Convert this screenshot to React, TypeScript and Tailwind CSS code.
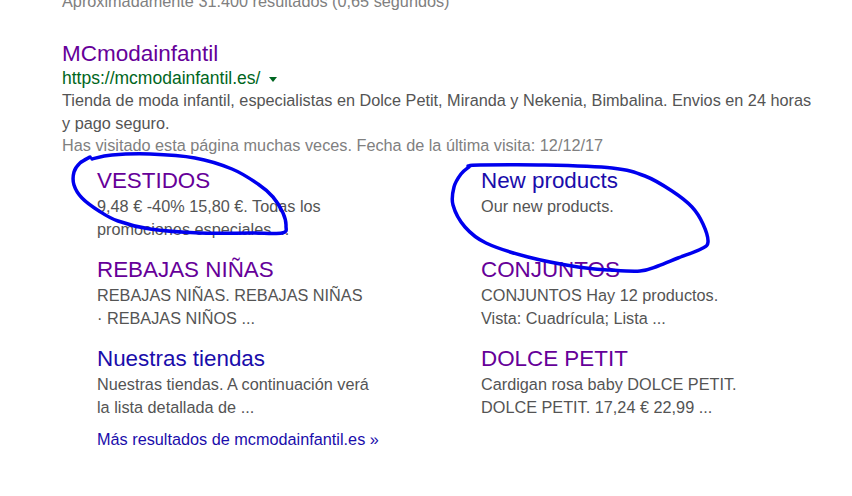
const font = { fontFamily: '"Liberation Sans", Arial, sans-serif' };

type Pt = [number, number];

// smooth catmull-rom style path through hand-drawn points
function smooth(pts: Pt[]) {
  let d = `M${pts[0][0]},${pts[0][1]}`;
  for (let i = 0; i < pts.length - 1; i++) {
    const p0 = pts[i - 1] || pts[i];
    const p1 = pts[i];
    const p2 = pts[i + 1];
    const p3 = pts[i + 2] || p2;
    const c1: Pt = [p1[0] + (p2[0] - p0[0]) / 6, p1[1] + (p2[1] - p0[1]) / 6];
    const c2: Pt = [p2[0] - (p3[0] - p1[0]) / 6, p2[1] - (p3[1] - p1[1]) / 6];
    d += ` C${c1[0]},${c1[1]} ${c2[0]},${c2[1]} ${p2[0]},${p2[1]}`;
  }
  return d;
}

const loopLeft: Pt[] = [
  [90, 157], [80, 163], [74, 172], [74, 185], [82, 198], [99, 211], [118, 221], [150, 229],
  [200, 233], [250, 233], [282, 233], [286, 226], [283, 213], [273, 197], [258, 184],
  [232, 169], [195, 158], [150, 154], [112, 155], [92, 159],
];

const loopRight: Pt[] = [
  [468, 166], [480, 165], [545, 165], [612, 168], [645, 176], [672, 191], [692, 207],
  [703, 224], [708, 242], [701, 249], [678, 258], [658, 266], [640, 271], [610, 270],
  [578, 267], [528, 257], [486, 243], [465, 227], [453, 205], [454, 187], [461, 174], [469, 167],
];

function Sitelink({ title, lines, visited }: { title: string; lines: string[]; visited?: boolean }) {
  return (
    <div className="mb-[15px]">
      <div className={`text-[22.4px] leading-[28px] ${visited ? 'text-[#660099]' : 'text-[#1a0dab]'}`}>{title}</div>
      {lines.map((l, i) => (
        <div key={i} className="text-[16.25px] leading-[23px] text-[#545454]">{l}</div>
      ))}
    </div>
  );
}

export default function App() {
  return (
    <div className="relative w-[852px] h-[496px] overflow-hidden bg-white" style={font}>
      <div className="pl-[62px]">
        <div className="mt-[-10px] text-[16.25px] leading-[23px] text-[#808080]">
          Aproximadamente 31.400 resultados (0,65 segundos)
        </div>

        <div className="mt-[27px] text-[22.5px] leading-[27px] text-[#660099]">MCmodainfantil</div>
        <div className="flex items-center h-[22px] text-[17.5px] text-[#006621]">
          <span>https://mcmodainfantil.es/</span>
          <span className="ml-[9px] mt-[2px] w-0 h-0 border-x-[4px] border-x-transparent border-t-[5px] border-t-[#006621]" />
        </div>
        <div className="text-[16.25px] leading-[22.5px] text-[#545454] w-[758px]">
          Tienda de moda infantil, especialistas en Dolce Petit, Miranda y Nekenia, Bimbalina. Envios en 24 horas y pago seguro.
        </div>
        <div className="text-[16.25px] leading-[22.5px] text-[#808080]">
          Has visitado esta página muchas veces. Fecha de la última visita: 12/12/17
        </div>

        <div className="mt-[10px] pl-[35px] grid grid-cols-[384px_384px]">
          <Sitelink visited title="VESTIDOS" lines={['9,48 € -40% 15,80 €. Todas los', 'promociones especiales ...']} />
          <Sitelink title="New products" lines={['Our new products.']} />
          <Sitelink visited title="REBAJAS NIÑAS" lines={['REBAJAS NIÑAS. REBAJAS NIÑAS', '· REBAJAS NIÑOS ...']} />
          <Sitelink visited title="CONJUNTOS" lines={['CONJUNTOS Hay 12 productos.', 'Vista: Cuadrícula; Lista ...']} />
          <Sitelink title="Nuestras tiendas" lines={['Nuestras tiendas. A continuación verá', 'la lista detallada de ...']} />
          <Sitelink visited title="DOLCE PETIT" lines={['Cardigan rosa baby DOLCE PETIT.', 'DOLCE PETIT. 17,24 € 22,99 ...']} />
          <div className="mt-[-6px] text-[16.25px] leading-[23px] text-[#1a0dab]">Más resultados de mcmodainfantil.es »</div>
        </div>
      </div>

      <svg className="absolute inset-0 pointer-events-none" width="852" height="496" viewBox="0 0 852 496">
        <path d={smooth(loopLeft)} fill="none" stroke="#0000ee" strokeWidth="3.5" strokeLinecap="round" strokeLinejoin="round" />
        <path d={smooth(loopRight)} fill="none" stroke="#0000ee" strokeWidth="3.5" strokeLinecap="round" strokeLinejoin="round" />
      </svg>
    </div>
  );
}
